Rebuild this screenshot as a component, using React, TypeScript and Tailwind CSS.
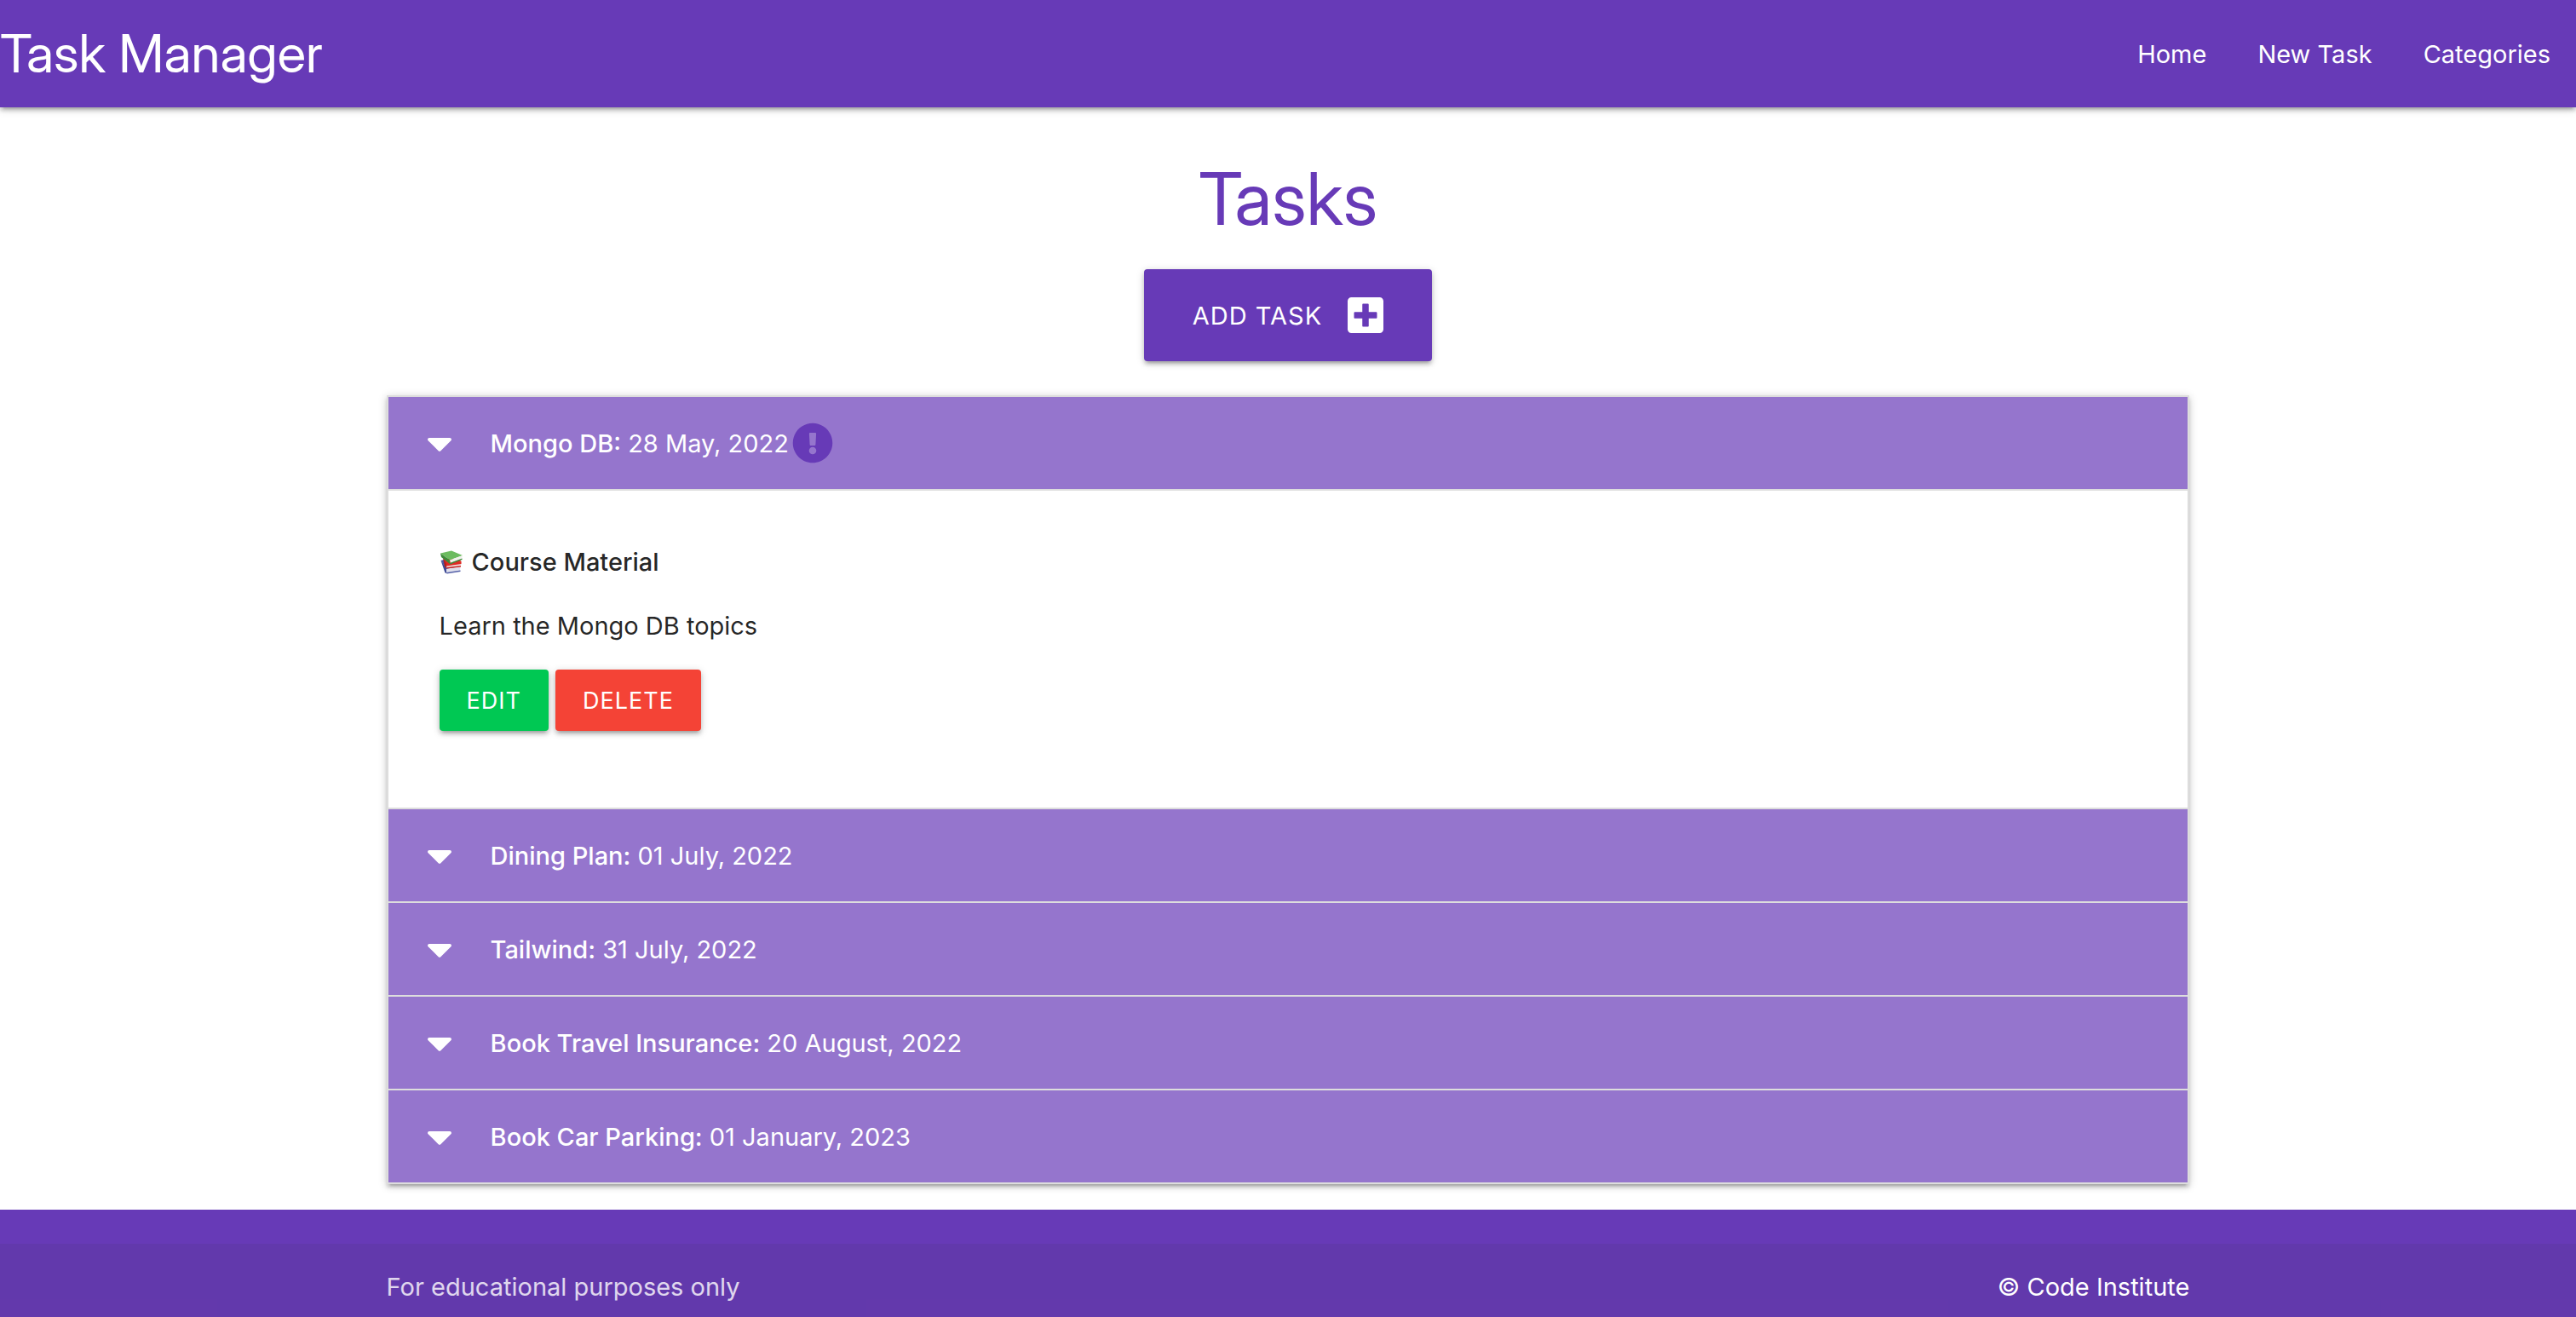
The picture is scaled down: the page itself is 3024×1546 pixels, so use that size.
import { useState } from "react";
import { FaCaretDown, FaExclamationCircle, FaPlusSquare } from "react-icons/fa";

type Task = {
  name: string;
  due: string;
  urgent?: boolean;
  category: string;
  description: string;
};

const tasks: Task[] = [
  {
    name: "Mongo DB:",
    due: "28 May, 2022",
    urgent: true,
    category: "Course Material",
    description: "Learn the Mongo DB topics",
  },
  { name: "Dining Plan:", due: "01 July, 2022", category: "", description: "" },
  { name: "Tailwind:", due: "31 July, 2022", category: "", description: "" },
  { name: "Book Travel Insurance:", due: "20 August, 2022", category: "", description: "" },
  { name: "Book Car Parking:", due: "01 January, 2023", category: "", description: "" },
];

const links = ["Home", "New Task", "Categories"];

function Books() {
  return (
    <svg viewBox="0 0 28 28" className="size-7 shrink-0" aria-hidden="true">
      <path d="M1.500 12 L5 11 L24 19 L8 22 Z" fill="#4a57a3" />
      <path d="M1.500 12 L8 21 L8.500 27 L6.500 26.500 Z" fill="#3d4a94" />
      <path d="M8 22 L24.500 19.500 L24 24.500 L8.500 27 Z" fill="#dfe0ec" />
      <path d="M8 26 L24.500 23.500 L24.500 25 L8.500 27.500 Z" fill="#5560a8" />
      <path d="M4 9 L24 11 L25.500 14 L8 17 Z" fill="#e02a24" />
      <path d="M4 9 L8 16 L8.500 21.500 L6 19 Z" fill="#b71f1b" />
      <path d="M8 16.500 L25.500 13.500 L25 19 L8.500 21 Z" fill="#f0dede" />
      <path d="M8 16 L25.500 13 L25.500 16 L8 18.500 Z" fill="#e02a24" />
      <path d="M8.500 20 L25 18 L25 19.500 L8.500 21.500 Z" fill="#c8231f" />
      <path d="M1 3.500 L14 0.500 L27 6 L12 11.500 Z" fill="#6cbb5f" />
      <path d="M1 3.500 L12 11.500 L12 16 L2 8 Z" fill="#3d8a3a" />
      <path d="M12 11.500 L27 6 L26 10 L13 15 Z" fill="#f1f1ec" />
      <path d="M12 15 L26.500 9.500 L26.500 11 L12.500 16.500 Z" fill="#3d8a3a" />
    </svg>
  );
}

export default function App() {
  const [open, setOpen] = useState(0);

  return (
    <div className="flex min-h-screen flex-col bg-white font-['Inter','Liberation_Sans',sans-serif] text-[29px] leading-[45px] text-black/87">
      <header className="relative bg-[#673ab7] text-white shadow-[0_4px_4px_0_rgba(0,0,0,0.14),0_6px_2px_-4px_rgba(0,0,0,0.12),0_2px_10px_0_rgba(0,0,0,0.2)]">
        <nav className="flex h-[126px] items-center justify-between">
          <a href="#" className="font-['Inter_Display','Inter',sans-serif] text-[62px] leading-none">
            Task Manager
          </a>
          <ul className="flex">
            {links.map((link) => (
              <li key={link}>
                <a href="#" className="block px-[30px]">
                  {link}
                </a>
              </li>
            ))}
          </ul>
        </nav>
      </header>

      <main className="mx-auto flex w-[70%] flex-col items-center">
        <h1 className="mt-[60px] font-['Inter_Display','Inter',sans-serif] text-[85px] leading-[96px] text-[#673ab7]">
          Tasks
        </h1>
        <button
          type="button"
          className="mt-[34px] flex h-[108px] items-center gap-[30px] rounded bg-[#673ab7] px-[57px] tracking-[1px] text-white shadow-[0_4px_4px_0_rgba(0,0,0,0.14),0_6px_2px_-4px_rgba(0,0,0,0.12),0_2px_10px_0_rgba(0,0,0,0.2)]"
        >
          ADD TASK
          <FaPlusSquare className="h-12 w-[42px]" />
        </button>

        <ul className="mt-10 mb-[30px] w-full border-2 border-b-0 border-[#ddd] shadow-[0_4px_4px_0_rgba(0,0,0,0.14),0_6px_2px_-4px_rgba(0,0,0,0.12),0_2px_10px_0_rgba(0,0,0,0.2)]">
          {tasks.map((task, i) => (
            <li key={task.name}>
              <button
                type="button"
                aria-expanded={open === i}
                onClick={() => setOpen(open === i ? -1 : i)}
                className="flex h-[110px] w-full items-center border-b-2 border-[#ddd] bg-[#9575cd] px-[30px] text-left text-white"
              >
                <span className="mr-[30px] flex w-[60px] justify-center">
                  <FaCaretDown className="h-12 w-[30px]" />
                </span>
                <span>
                  <strong className="font-medium">{task.name}</strong> {task.due}
                </span>
                {task.urgent && <FaExclamationCircle className="ml-1 size-12 text-[#673ab7]" />}
              </button>
              {open === i && (
                <div className="border-b-2 border-[#ddd] px-[60px] pt-[61px] pb-[60px]">
                  <p className="flex items-center gap-2.5 font-medium">
                    <Books />
                    {task.category}
                  </p>
                  <p className="mt-[30px]">{task.description}</p>
                  <div className="mt-[29px] mb-[30px] flex gap-2 text-[27px] tracking-[1px] text-white">
                    <button
                      type="button"
                      className="h-[72px] rounded bg-[#00c853] px-8 shadow-[0_4px_4px_0_rgba(0,0,0,0.14),0_6px_2px_-4px_rgba(0,0,0,0.12),0_2px_10px_0_rgba(0,0,0,0.2)]"
                    >
                      EDIT
                    </button>
                    <button
                      type="button"
                      className="h-[72px] rounded bg-[#f44336] px-8 shadow-[0_4px_4px_0_rgba(0,0,0,0.14),0_6px_2px_-4px_rgba(0,0,0,0.12),0_2px_10px_0_rgba(0,0,0,0.2)]"
                    >
                      DELETE
                    </button>
                  </div>
                </div>
              )}
            </li>
          ))}
        </ul>
      </main>

      <footer className="flex grow flex-col bg-[#673ab7] pt-10">
        <div className="grow bg-[#333]/8 pt-7">
          <div className="mx-auto flex w-[70%] justify-between text-white/80">
            <span>For educational purposes only</span>
            <a href="#" className="text-white">
              © Code Institute
            </a>
          </div>
        </div>
      </footer>
    </div>
  );
}
